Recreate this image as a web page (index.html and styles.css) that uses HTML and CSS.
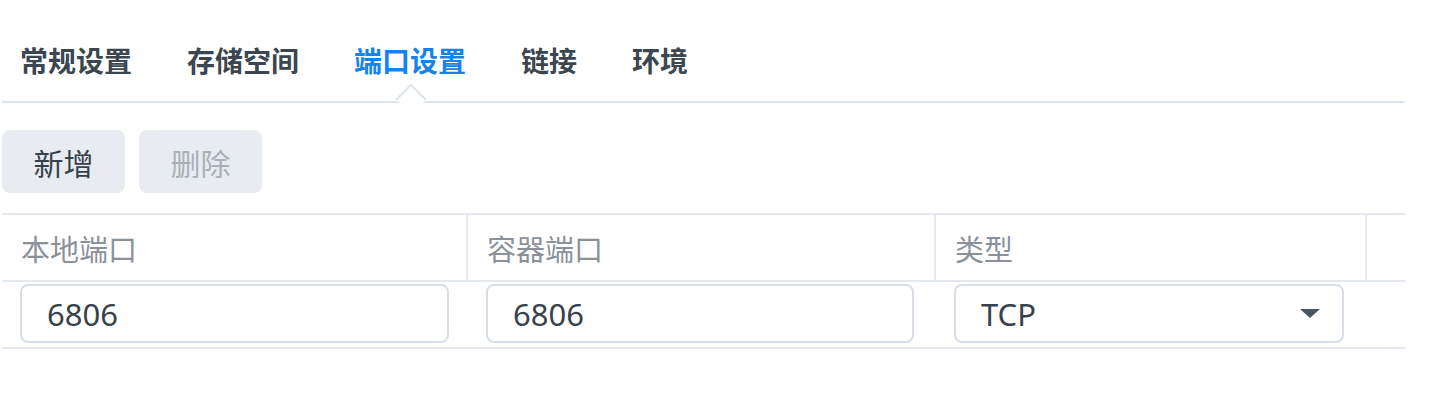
FILE: index.html
```html
<!DOCTYPE html>
<html lang="zh-CN">
<head>
<meta charset="utf-8">
<title>端口设置</title>
<link rel="stylesheet" href="styles.css">
</head>
<body>
<div class="page">
  <nav class="tabs">
    <span class="tab">常规设置</span>
    <span class="tab">存储空间</span>
    <span class="tab active">端口设置</span>
    <span class="tab">链接</span>
    <span class="tab">环境</span>
  </nav>
  <div class="toolbar">
    <button class="btn">新增</button>
    <button class="btn disabled">删除</button>
  </div>
  <div class="table">
    <div class="row head">
      <div class="cell">本地端口</div>
      <div class="cell">容器端口</div>
      <div class="cell">类型</div>
      <div class="cell last"></div>
    </div>
    <div class="row body">
      <div class="cell"><div class="field">6806</div></div>
      <div class="cell"><div class="field">6806</div></div>
      <div class="cell"><div class="field select"><span>TCP</span><span class="arrow"></span></div></div>
      <div class="cell last"></div>
    </div>
  </div>
</div>
</body>
</html>
```
FILE: styles.css
```css
* { box-sizing: border-box; }
body {
  margin: 0;
  background: #fff;
  font-family: "Noto Sans", "Noto Sans CJK SC", sans-serif;
  color: #3b4550;
}
.page {
  width: 1405px;
  padding-left: 2px;
}
.tabs {
  display: flex;
  gap: 55px;
  padding: 40px 0 21px 18px;
  border-bottom: 2px solid #dce4eb;
  height: 103px;
}
.tab {
  position: relative;
  font-family: "Noto Sans CJK SC", sans-serif;
  font-size: 28px;
  line-height: 40px;
  font-weight: 700;
  color: #3c4650;
}
.tab.active { color: #1583e9; }
.tab.active::after {
  content: "";
  position: absolute;
  left: 50%;
  bottom: -30px;
  width: 20px;
  height: 20px;
  margin-left: -10px;
  background: #fff;
  border-top: 2px solid #dce4eb;
  border-left: 2px solid #dce4eb;
  transform: rotate(45deg);
}
.toolbar {
  display: flex;
  gap: 14px;
  margin-top: 27px;
}
.btn {
  width: 123px;
  height: 63px;
  border: 0;
  border-radius: 8px;
  background: #e8ecf0;
  font-family: "Noto Sans CJK SC", sans-serif;
  font-size: 30px;
  color: #37414b;
  padding: 0;
}
.btn.disabled { color: #a9b0b7; }
.table {
  margin-top: 20px;
  border-top: 2px solid #e3e9ef;
}
.row {
  display: grid;
  grid-template-columns: 466px 468px 431px 1fr;
  border-bottom: 2px solid #e3e9ef;
}
.row.head { height: 67px; }
.row.body { height: 67px; }
.cell {
  display: flex;
  align-items: center;
  padding: 0 19px 0 18px;
}
.head .cell {
  border-right: 2px solid #e6ebf0;
  font-family: "Noto Sans CJK SC", sans-serif;
  font-size: 29px;
  color: #8a9199;
  padding-left: 19px;
}
.head .cell.last { border-right: 0; }
.body .cell { padding-top: 2px; align-items: flex-start; }
.field {
  width: 100%;
  height: 59px;
  border: 2px solid #d6dfe8;
  border-radius: 8px;
  display: flex;
  align-items: center;
  padding-left: 25px;
  font-size: 31px;
  color: #38424c;
}
.body .cell:nth-child(2) { padding-right: 22px; }
.body .cell:nth-child(3) { padding-right: 23px; }
.select {
  justify-content: space-between;
  padding-right: 22px;
}
.arrow {
  width: 0;
  height: 0;
  border-left: 10px solid transparent;
  border-right: 10px solid transparent;
  border-top: 9px solid #4a5560;
}
```
